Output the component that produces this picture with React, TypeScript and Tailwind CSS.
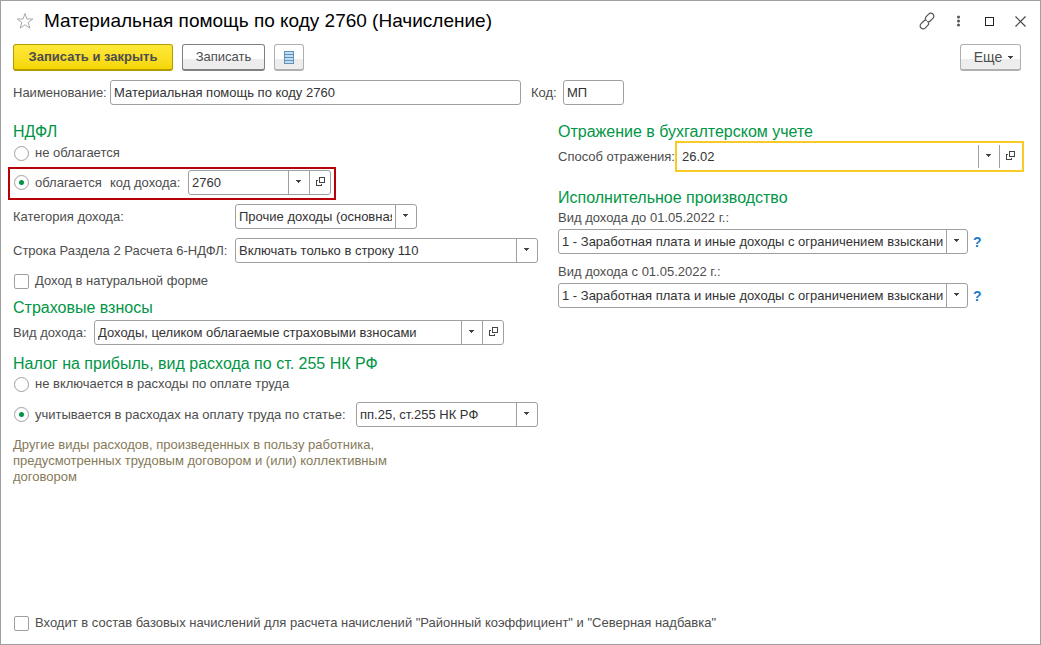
import React, { useState } from 'react';

interface SelectFieldProps {
    id: string;
    label: string;
    options: string[];
    className?: string;
    openable?: boolean;
    active?: boolean;
}

const OpenIcon = () => (
    <svg width="9" height="9" viewBox="0 0 9 9" fill="none" stroke="#444" shapeRendering="crispEdges">
        <path d="M3.5 0.5h5v5h-5z" />
        <path d="M2 3.5H0.5v5h5V7" />
    </svg>
);

const Arrow = () => (
    <svg width="5" height="3" viewBox="0 0 5 3" fill="#444" shapeRendering="crispEdges">
        <path d="M0 0h5v1H4v1H3v1H2V2H1V1H0z" />
    </svg>
);

// Drop-down with its arrow cell and an optional "open card" button
const SelectField: React.FC<SelectFieldProps> = ({ id, label, options, className = '', openable, active }) => (
    <div className={`flex min-w-0 bg-white ${active ? 'h-[31px] border-2 border-[#f9c925] px-0.5 py-0.5' : 'h-[25px] rounded-[3px] border border-[#a0a0a0]'} ${className}`}>
        <div className="relative min-w-0 flex-1">
            <select id={id} aria-label={label} className="h-full w-full appearance-none bg-transparent pr-6 pl-[3px] text-[#333] outline-none">
                {options.map(option => <option key={option}>{option}</option>)}
            </select>
            <span className="pointer-events-none absolute inset-y-0 right-0 flex w-[21px] items-center justify-center border-l border-[#a0a0a0] pr-0.5 pb-0.5">
                <Arrow />
            </span>
        </div>
        {openable && (
            <button type="button" aria-label={`Открыть: ${label}`} className="flex w-[21px] items-center justify-center border-l border-[#a0a0a0] pb-0.5">
                <OpenIcon />
            </button>
        )}
    </div>
);

interface RadioProps {
    name: string;
    label: string;
    checked: boolean;
    onChange: () => void;
}

const Radio: React.FC<RadioProps> = ({ name, label, checked, onChange }) => (
    <label className="flex h-5 items-center gap-1.5 whitespace-nowrap">
        <input
            type="radio"
            name={name}
            checked={checked}
            onChange={onChange}
            className="ml-px grid size-[15px] shrink-0 appearance-none place-content-center rounded-full border border-[#a0a0a0] bg-white checked:before:size-[5px] checked:before:rounded-full checked:before:bg-[#009646] checked:before:content-['']"
        />
        {label}
    </label>
);

const Checkbox: React.FC<{ label: string }> = ({ label }) => (
    <label className="flex h-5 items-center gap-1.5">
        <input type="checkbox" className="ml-px size-[15px] shrink-0 appearance-none rounded-[2px] border border-[#a0a0a0] bg-white checked:bg-[#009646]" />
        {label}
    </label>
);

const Heading: React.FC<{ className?: string; children: React.ReactNode }> = ({ className = '', children }) => (
    <h2 className={`h-5 text-[16px] leading-[22px] whitespace-nowrap text-[#009646] ${className}`}>{children}</h2>
);

const buttonStyle = 'flex h-[27px] items-center justify-center rounded-[3px] border border-b-2 bg-linear-to-b from-white from-60% to-[#ededed] to-60%';
const inputStyle = 'h-[25px] min-w-0 rounded-[3px] border border-[#a0a0a0] bg-white px-[3px] text-[#333] outline-none';
const helpStyle = 'w-[11px] text-left text-[14px] font-bold text-[#1a7bc9]';
const incomeKind = '1 - Заработная плата и иные доходы с ограничением взыскания';

export default function App() {
    const [taxed, setTaxed] = useState(true);
    const [included, setIncluded] = useState(true);

    return (
        <main className="flex min-h-screen flex-col border border-[#a0a0a0] bg-white pr-4 pb-[11px] pl-3 font-['Liberation_Sans',Arial,sans-serif] text-[13px] leading-4 text-[#4d4d4d]">
            <header className="flex h-10 items-center">
                <button type="button" aria-label="Добавить в избранное" className="ml-[3px]">
                    <svg width="18" height="18" viewBox="0 0 18 18" fill="none" stroke="#a8a8a8">
                        <path d="M9 1.5l2 5.5h5.8l-4.6 3.5 1.7 5.6L9 12.8l-4.9 3.3 1.7-5.6L1.2 7H7z" />
                    </svg>
                </button>
                <h1 className="ml-2.5 flex-1 text-[19px] leading-6 text-black">Материальная помощь по коду 2760 (Начисление)</h1>
                <div className="-mr-0.5 flex items-center text-[#555]">
                    <button type="button" aria-label="Получить ссылку">
                        <svg width="18" height="18" viewBox="0 0 18 18" fill="none" stroke="currentColor" strokeWidth="1.2" strokeLinecap="round">
                            <path d="M7.6 7.2c-.5-1-.3-1.7.4-2.4l2.6-2.6c1.2-1.2 3.1-1.3 4.3-.2 1.3 1.2 1.2 3.1 0 4.3l-2.7 2.7c-.7.7-1.7 1-2.6.7" />
                            <path d="M10.4 10.8c.5 1 .3 1.7-.4 2.4l-2.6 2.6c-1.2 1.2-3.1 1.3-4.3.2-1.3-1.2-1.2-3.1 0-4.3L5.800 9c.7-.7 1.7-1 2.600-.7" />
                        </svg>
                    </button>
                    <button type="button" aria-label="Меню" className="ml-5">
                        <svg width="5" height="12" viewBox="0 0 5 12" fill="currentColor">
                            <circle cx="2.5" cy="2" r="1.5" />
                            <circle cx="2.5" cy="6" r="1.5" />
                            <circle cx="2.5" cy="10" r="1.5" />
                        </svg>
                    </button>
                    <button type="button" aria-label="Развернуть" className="ml-6">
                        <svg width="10" height="10" viewBox="0 0 10 10" fill="none" stroke="#222" shapeRendering="crispEdges">
                            <path d="M0.5 1.5h8v8h-8z" />
                        </svg>
                    </button>
                    <button type="button" aria-label="Закрыть" className="ml-5">
                        <svg width="11" height="11" viewBox="0 0 11 11" fill="none" stroke="#444" strokeWidth="1.2">
                            <path d="M0.5 0.5l10 10M10.5 0.5l-10 10" />
                        </svg>
                    </button>
                </div>
            </header>

            <div className="mt-[3px] flex gap-[9px]">
                <button type="button" className="h-[27px] w-[160px] rounded-[3px] border border-b-2 border-[#b39b00] bg-linear-to-b from-[#ffe838] to-[#f5d700] font-bold">
                    Записать и закрыть
                </button>
                <button type="button" className={`${buttonStyle} w-[83px] border-[#808080]`}>Записать</button>
                <button type="button" aria-label="Список" className={`${buttonStyle} w-[30px] border-[#b0b0b0]`}>
                    <svg width="10" height="13" viewBox="0 0 10 13" shapeRendering="crispEdges">
                        <path fill="#c3dcef" d="M0 0h10v13H0z" />
                        <path fill="none" stroke="#5f92bd" d="M0.5 0.5h9v12h-9zM1 3.5h8M1 6.5h8M1 9.5h8" />
                    </svg>
                </button>
                <button type="button" className={`${buttonStyle} mr-[3px] ml-auto w-[61px] gap-1.5 border-[#b0b0b0] pl-1.5 text-[14px]`}>
                    Еще
                    <Arrow />
                </button>
            </div>

            <div className="mt-[9px] flex max-w-[611px] items-center">
                <label htmlFor="name" className="w-[97px] shrink-0">Наименование:</label>
                <input id="name" defaultValue="Материальная помощь по коду 2760" className={`${inputStyle} flex-1`} />
                <label htmlFor="code" className="ml-2.5 w-8 shrink-0">Код:</label>
                <input id="code" defaultValue="МП" className={`${inputStyle} w-[61px]`} />
            </div>

            <div className="mt-4 grid grid-cols-[545fr_466fr]">
                <section className="min-w-0 pr-5">
                    <Heading className="mb-0.5">НДФЛ</Heading>
                    <Radio name="tax" label="не облагается" checked={!taxed} onChange={() => setTaxed(false)} />
                    <div className="mt-1 -ml-[5px] flex h-[33px] w-[328px] items-center border-2 border-[#b80009] px-[3px] pb-0.5">
                        <Radio name="tax" label="облагается" checked={taxed} onChange={() => setTaxed(true)} />
                        <label htmlFor="incomeCode" className="ml-auto w-[78px] whitespace-nowrap">код дохода:</label>
                        <SelectField id="incomeCode" label="код дохода" options={['2760']} className="w-[143px]" openable />
                    </div>
                    <div className="mt-1 flex items-center">
                        <label htmlFor="category" className="w-[222px] shrink-0">Категория дохода:</label>
                        <SelectField id="category" label="Категория дохода" options={['Прочие доходы (основная налоговая база)']} className="w-[182px]" />
                    </div>
                    <div className="mt-[9px] flex items-center">
                        <label htmlFor="line" className="w-[222px] shrink-0 whitespace-nowrap">Строка Раздела 2 Расчета 6-НДФЛ:</label>
                        <SelectField id="line" label="Строка Раздела 2" options={['Включать только в строку 110']} className="flex-1" />
                    </div>
                    <div className="mt-2">
                        <Checkbox label="Доход в натуральной форме" />
                    </div>

                    <Heading className="mt-1.5 mb-[3px]">Страховые взносы</Heading>
                    <div className="flex items-center">
                        <label htmlFor="insurance" className="w-[81px] shrink-0">Вид дохода:</label>
                        <SelectField id="insurance" label="Вид дохода" options={['Доходы, целиком облагаемые страховыми взносами']} className="w-[410px]" openable />
                    </div>

                    <Heading className="mt-2 mb-px">Налог на прибыль, вид расхода по ст. 255 НК РФ</Heading>
                    <Radio name="profit" label="не включается в расходы по оплате труда" checked={!included} onChange={() => setIncluded(false)} />
                    <div className="mt-2 flex items-center justify-between">
                        <Radio name="profit" label="учитывается в расходах на оплату труда по статье:" checked={included} onChange={() => setIncluded(true)} />
                        <SelectField id="article" label="Статья расходов" options={['пп.25, ст.255 НК РФ']} className="w-[182px]" />
                    </div>
                    <p className="mt-2.5 max-w-[390px] text-[#857a58]">
                        Другие виды расходов, произведенных в пользу работника, предусмотренных трудовым договором и (или) коллективным договором
                    </p>
                </section>

                <section className="min-w-0">
                    <Heading>Отражение в бухгалтерском учете</Heading>
                    <div className="flex items-center">
                        <label htmlFor="method" className="w-[117px] shrink-0 whitespace-nowrap">Способ отражения:</label>
                        <SelectField id="method" label="Способ отражения" options={['26.02']} className="flex-1" openable active />
                    </div>

                    <Heading className="mt-[15px]">Исполнительное производство</Heading>
                    <label htmlFor="kindBefore" className="mt-px block leading-5">Вид дохода до 01.05.2022 г.:</label>
                    <div className="mt-px mr-10 flex items-center gap-[5px]">
                        <SelectField id="kindBefore" label="Вид дохода до 01.05.2022" options={[incomeKind]} className="flex-1" />
                        <button type="button" aria-label="Справка" className={helpStyle}>?</button>
                    </div>
                    <label htmlFor="kindAfter" className="mt-2 block leading-5">Вид дохода с 01.05.2022 г.:</label>
                    <div className="mt-px mr-10 flex items-center gap-[5px]">
                        <SelectField id="kindAfter" label="Вид дохода с 01.05.2022" options={[incomeKind]} className="flex-1" />
                        <button type="button" aria-label="Справка" className={helpStyle}>?</button>
                    </div>
                </section>
            </div>

            <div className="mt-auto">
                <Checkbox label={'Входит в состав базовых начислений для расчета начислений "Районный коэффициент" и "Северная надбавка"'} />
            </div>
        </main>
    );
}
